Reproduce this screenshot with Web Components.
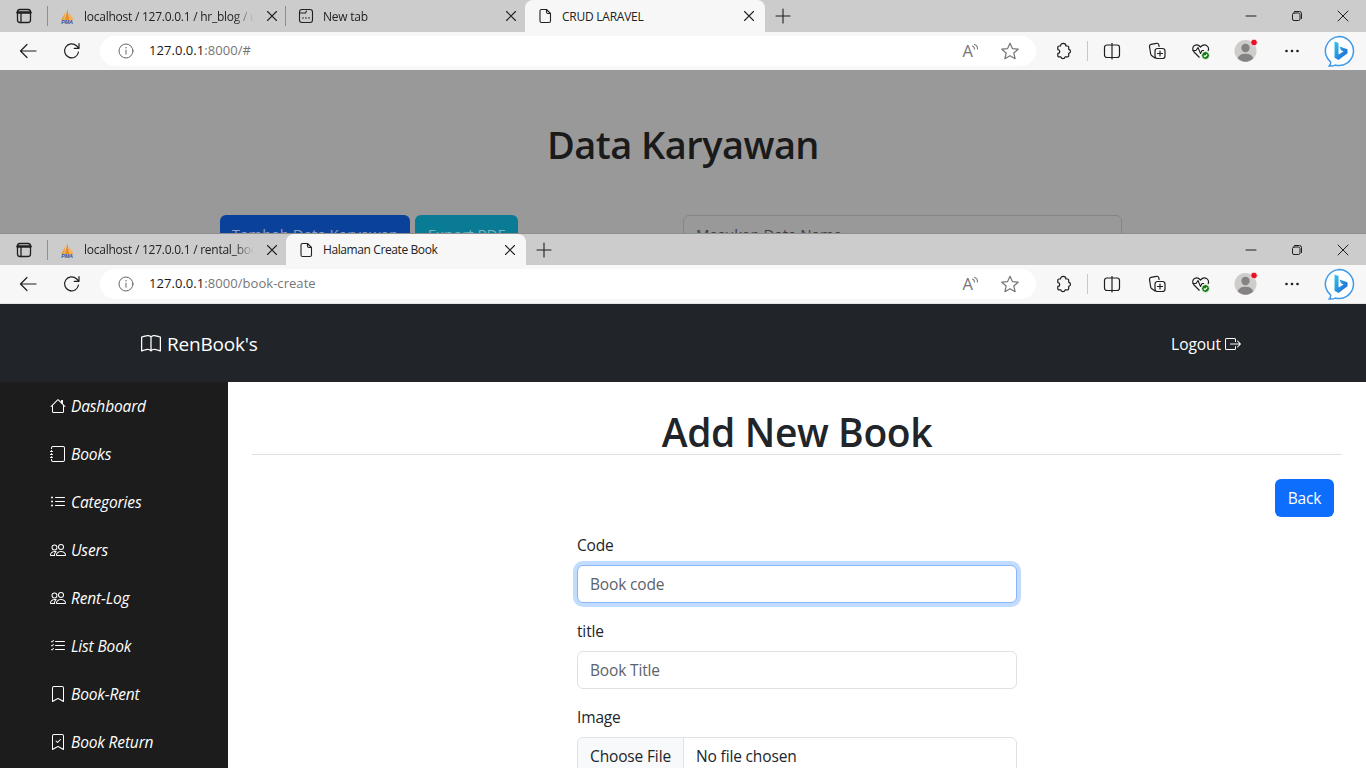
<!DOCTYPE html>
<html lang="en">
<head>
<meta charset="utf-8">
<title>Halaman Create Book</title>
<style>
  html, body { margin: 0; height: 768px; overflow: hidden; }
  body { display: flex; flex-direction: column; font-family: "Open Sans", "Liberation Sans", sans-serif; }
</style>
</head>
<body>

<browser-window style="height:233px" url-host="127.0.0.1" url-path=":8000/#" strip="32">
  <browser-tab slot="tabs" icon="pma" width="239" label="localhost / 127.0.0.1 / hr_blog / u" sep></browser-tab>
  <browser-tab slot="tabs" icon="newtab" width="239" label="New tab"></browser-tab>
  <browser-tab slot="tabs" icon="page" width="240" label="CRUD LARAVEL" active></browser-tab>
  <dimmed-page></dimmed-page>
</browser-window>

<browser-window style="flex:1" url-host="127.0.0.1" url-path=":8000/book-create" strip="31" edge>
  <browser-tab slot="tabs" icon="pma" width="239" label="localhost / 127.0.0.1 / rental_boo"></browser-tab>
  <browser-tab slot="tabs" icon="page" width="240" label="Halaman Create Book" active style="letter-spacing:-.4px"></browser-tab>
  <book-app></book-app>
</browser-window>

<script>
'use strict';

// bootstrap icons, 16x16 grid
const bsIcons = {
  book: 'M1 2.828c.885-.37 2.154-.769 3.388-.893 1.33-.134 2.458.063 3.112.752v9.746c-.935-.53-2.12-.603-3.213-.493-1.18.12-2.37.461-3.287.811V2.828zm7.5-.141c.654-.689 1.782-.886 3.112-.752 1.234.124 2.503.523 3.388.893v9.923c-.918-.35-2.107-.692-3.287-.81-1.094-.111-2.278-.039-3.213.492V2.687zM8 1.783C7.015.936 5.587.81 4.287.94c-1.514.153-3.042.672-3.994 1.105A.5.5 0 0 0 0 2.5v11a.5.5 0 0 0 .707.455c.882-.4 2.303-.881 3.68-1.02 1.409-.142 2.59.087 3.223.877a.5.5 0 0 0 .78 0c.633-.79 1.814-1.019 3.222-.877 1.378.139 2.8.62 3.681 1.02A.5.5 0 0 0 16 13.5v-11a.5.5 0 0 0-.293-.455c-.952-.433-2.48-.952-3.994-1.105C10.413.809 8.985.936 8 1.783z',
  house: 'M8.707 1.5a1 1 0 0 0-1.414 0L.646 8.146a.5.5 0 0 0 .708.708L2 8.207V13.5A1.5 1.5 0 0 0 3.5 15h9a1.5 1.5 0 0 0 1.5-1.5V8.207l.646.647a.5.5 0 0 0 .708-.708L13 5.793V2.5a.5.5 0 0 0-.5-.5h-1a.5.5 0 0 0-.5.5v1.293L8.707 1.5ZM13 7.207V13.5a.5.5 0 0 1-.5.5h-9a.5.5 0 0 1-.5-.5V7.207l5-5 5 5Z',
  journal: 'M3 0h10a2 2 0 0 1 2 2v12a2 2 0 0 1-2 2H3a2 2 0 0 1-2-2v-1h1v1a1 1 0 0 0 1 1h10a1 1 0 0 0 1-1V2a1 1 0 0 0-1-1H3a1 1 0 0 0-1 1v1H1V2a2 2 0 0 1 2-2zM1 5v-.5a.5.5 0 0 1 1 0V5h.5a.5.5 0 0 1 0 1h-2a.5.5 0 0 1 0-1H1zm0 3v-.5a.5.5 0 0 1 1 0V8h.5a.5.5 0 0 1 0 1h-2a.5.5 0 0 1 0-1H1zm0 3v-.5a.5.5 0 0 1 1 0v.5h.5a.5.5 0 0 1 0 1h-2a.5.5 0 0 1 0-1H1z',
  list: 'M5 11.5a.5.5 0 0 1 .5-.5h9a.5.5 0 0 1 0 1h-9a.5.5 0 0 1-.5-.5zm0-4a.5.5 0 0 1 .5-.5h9a.5.5 0 0 1 0 1h-9a.5.5 0 0 1-.5-.5zm0-4a.5.5 0 0 1 .5-.5h9a.5.5 0 0 1 0 1h-9a.5.5 0 0 1-.5-.5zm-3 1a1 1 0 1 0 0-2 1 1 0 0 0 0 2zm0 4a1 1 0 1 0 0-2 1 1 0 0 0 0 2zm0 4a1 1 0 1 0 0-2 1 1 0 0 0 0 2z',
  people: 'M15 14s1 0 1-1-1-4-5-4-5 3-5 4 1 1 1 1h8Zm-7.978-1A.261.261 0 0 1 7 12.996c.001-.264.167-1.03.76-1.72C8.312 10.629 9.282 10 11 10c1.717 0 2.687.63 3.24 1.276.593.69.758 1.457.76 1.72l-.008.002a.274.274 0 0 1-.014.002H7.022ZM11 7a2 2 0 1 0 0-4 2 2 0 0 0 0 4Zm3-2a3 3 0 1 1-6 0 3 3 0 0 1 6 0ZM6.936 9.28a5.88 5.88 0 0 0-1.23-.247A7.35 7.35 0 0 0 5 9c-4 0-5 3-5 4 0 .667.333 1 1 1h4.216A2.238 2.238 0 0 1 5 13c0-1.01.377-2.042 1.09-2.904.243-.294.526-.569.846-.816ZM4.92 10A5.493 5.493 0 0 0 4 13H1c0-.26.164-1.03.76-1.724.545-.636 1.492-1.256 3.16-1.275ZM1.5 5.5a3 3 0 1 1 6 0 3 3 0 0 1-6 0Zm3-2a2 2 0 1 0 0 4 2 2 0 0 0 0-4Z',
  listcheck: 'M5 11.5a.5.5 0 0 1 .5-.5h9a.5.5 0 0 1 0 1h-9a.5.5 0 0 1-.5-.5zm0-4a.5.5 0 0 1 .5-.5h9a.5.5 0 0 1 0 1h-9a.5.5 0 0 1-.5-.5zm0-4a.5.5 0 0 1 .5-.5h9a.5.5 0 0 1 0 1h-9a.5.5 0 0 1-.5-.5zM3.854 2.146a.5.5 0 0 1 0 .708l-1.5 1.5a.5.5 0 0 1-.708 0l-.5-.5a.5.5 0 1 1 .708-.708L2 3.293l1.146-1.147a.5.5 0 0 1 .708 0zm0 4a.5.5 0 0 1 0 .708l-1.5 1.5a.5.5 0 0 1-.708 0l-.5-.5a.5.5 0 1 1 .708-.708L2 7.293l1.146-1.147a.5.5 0 0 1 .708 0zm0 4a.5.5 0 0 1 0 .708l-1.5 1.5a.5.5 0 0 1-.708 0l-.5-.5a.5.5 0 0 1 .708-.708l.146.147 1.146-1.147a.5.5 0 0 1 .708 0z',
  bookmark: 'M2 2a2 2 0 0 1 2-2h8a2 2 0 0 1 2 2v13.5a.5.5 0 0 1-.777.416L8 13.101l-5.223 2.815A.5.5 0 0 1 2 15.5V2zm2-1a1 1 0 0 0-1 1v12.566l4.723-2.482a.5.5 0 0 1 .554 0L13 14.566V2a1 1 0 0 0-1-1H4z',
  bookmarkcheck: 'M10.854 5.146a.5.5 0 0 1 0 .708l-3 3a.5.5 0 0 1-.708 0l-1.5-1.5a.5.5 0 1 1 .708-.708L7.5 7.793l2.646-2.647a.5.5 0 0 1 .708 0zM2 2a2 2 0 0 1 2-2h8a2 2 0 0 1 2 2v13.5a.5.5 0 0 1-.777.416L8 13.101l-5.223 2.815A.5.5 0 0 1 2 15.5V2zm2-1a1 1 0 0 0-1 1v12.566l4.723-2.482a.5.5 0 0 1 .554 0L13 14.566V2a1 1 0 0 0-1-1H4z',
  logout: 'M10 12.5a.5.5 0 0 1-.5.5h-8a.5.5 0 0 1-.5-.5v-9a.5.5 0 0 1 .5-.5h8a.5.5 0 0 1 .5.5v2a.5.5 0 0 0 1 0v-2A1.5 1.5 0 0 0 9.5 2h-8A1.5 1.5 0 0 0 0 3.5v9A1.5 1.5 0 0 0 1.5 14h8a1.5 1.5 0 0 0 1.5-1.5v-2a.5.5 0 0 0-1 0v2zM15.854 8.354a.5.5 0 0 0 0-.708l-3-3a.5.5 0 0 0-.708.708L14.293 7.5H5.5a.5.5 0 0 0 0 1h8.793l-2.147 2.146a.5.5 0 0 0 .708.708l3-3z'
};

class BsIcon extends HTMLElement {
  connectedCallback() {
    const size = this.getAttribute('size') || 16;
    this.attachShadow({mode: 'open'}).innerHTML = `
      <style>:host { display: inline-flex; flex: none; } svg { display: block; }</style>
      <svg width="${size}" height="${size}" viewBox="0 0 16 16" fill="currentColor"><path fill-rule="evenodd" d="${bsIcons[this.getAttribute('name')]}"/></svg>`;
  }
}

// browser chrome glyphs, all on a 20x20 grid unless they say otherwise
const line = 'fill="none" stroke="currentColor" stroke-linecap="round" stroke-linejoin="round"';
const chromeIcons = {
  sidebar: `<svg width="20" height="20" viewBox="0 0 20 20" ${line} stroke-width="1.3"><rect x="3.5" y="3.5" width="13" height="13" rx="2.5"/><path d="M7 7v9.5"/><path d="M3.5 6.5h13" stroke-width="2.4"/></svg>`,
  pma: `<svg width="16" height="16" viewBox="0 0 16 16"><path d="M2 12 6 5l-.5 7z" fill="#e8a33a"/><path d="M6 12 8.3 1l2 11z" fill="#f08a1d"/><path d="M10.6 12 10 4.500 15 12z" fill="#f5b25a"/><text x="8" y="15.800" font-family="Liberation Sans" font-size="5.500" font-weight="700" font-style="italic" text-anchor="middle" fill="#3b4f8f" aria-hidden="true">PMA</text></svg>`,
  newtab: `<svg width="16" height="16" viewBox="0 0 16 16" ${line} stroke-width="1.1"><rect x="1.500" y="1.500" width="13" height="13" rx="2.500"/><path d="M1.500 5h6l1-2"/><path d="M5 10h.01M8 10h.01M11 10h.01" stroke-width="1.600"/></svg>`,
  page: `<svg width="16" height="16" viewBox="0 0 16 16" ${line} stroke-width="1.100"><path d="M3 3a1.500 1.500 0 0 1 1.500-1.500H9.500L13.500 5.500V13A1.500 1.500 0 0 1 12 14.500H4.500A1.500 1.500 0 0 1 3 13zM9.500 1.500V4A1.500 1.500 0 0 0 11 5.500h2.500"/></svg>`,
  close: `<svg width="12" height="12" viewBox="0 0 12 12" ${line} stroke-width="1.100"><path d="M1.500 1.500l9 9M10.500 1.500l-9 9"/></svg>`,
  plus: `<svg width="16" height="16" viewBox="0 0 16 16" ${line} stroke-width="1.100"><path d="M8 1v14M1 8h14"/></svg>`,
  minimize: `<svg width="12" height="12" viewBox="0 0 12 12" ${line} stroke-width="1"><path d="M1 6h10"/></svg>`,
  restore: `<svg width="12" height="12" viewBox="0 0 12 12" ${line} stroke-width="1"><rect x="1.500" y="3" width="7.500" height="7.500" rx="1.500"/><path d="M3.500 1.500h5A2 2 0 0 1 10.500 3.500v5"/></svg>`,
  winclose: `<svg width="12" height="12" viewBox="0 0 12 12" ${line} stroke-width="1"><path d="M1 1l10 10M11 1 1 11"/></svg>`,
  back: `<svg width="20" height="20" viewBox="0 0 20 20" ${line} stroke-width="1.200"><path d="M18 10H2.500M9 3.500 2.500 10 9 16.500"/></svg>`,
  reload: `<svg width="20" height="20" viewBox="0 0 20 20" ${line} stroke-width="1.200"><path d="M16.500 11a7 7 0 1 1-2-6.200L17 7.300M17 2.500v4.800h-4.800"/></svg>`,
  info: `<svg width="16" height="16" viewBox="0 0 16 16" fill="none" stroke="#666" stroke-width="1" stroke-linecap="round"><circle cx="8" cy="8" r="7"/><path d="M8 7.200v4"/><path d="M8 4.800h.01" stroke-width="1.400"/></svg>`,
  read: `<svg width="20" height="20" viewBox="0 0 20 20" style="overflow:visible"><text x="2.500" y="16" font-family="Open Sans" font-size="16.500" fill="#767676" aria-hidden="true">A</text><path d="M12.500 5c1.200.4 2 1.400 2 3M14.500 3.500c1.800.5 3 2.300 3 4.500" fill="none" stroke="#767676" stroke-width="1.100" stroke-linecap="round"/></svg>`,
  star: `<svg width="20" height="20" viewBox="0 0 20 20" fill="none" stroke="#767676" stroke-width="1.200" stroke-linejoin="round"><path d="M10 2.200 12.400 7.600l5.800.6-4.400 3.800 1.300 5.700-5.100-3-5.100 3 1.300-5.700L1.800 8.200l5.800-.6z"/></svg>`,
  extension: `<svg width="20" height="20" viewBox="0 0 20 20" ${line} stroke-width="1.200"><path d="M7.500 5c0-1.500 1.200-2.700 2.700-2.700s2.700 1.200 2.700 2.700h1.600c.7 0 1.200.5 1.200 1.200v2.100c1.200.2 1.800 1.100 1.800 2s-.6 1.800-1.800 2v2.400c0 .7-.5 1.200-1.200 1.200h-2.400c-.2 1-1.100 1.700-2.100 1.700s-1.900-.7-2.100-1.700H6c-.7 0-1.200-.5-1.200-1.200v-2.300c.9 0 1.900-.7 1.900-1.900s-1-1.900-1.900-1.900V6.200C4.800 5.500 5.300 5 6 5z"/></svg>`,
  split: `<svg width="20" height="20" viewBox="0 0 20 20" ${line} stroke-width="1.200"><rect x="2.500" y="4" width="15" height="12.500" rx="2.500"/><path d="M10 2.500v15.500"/></svg>`,
  collections: `<svg width="20" height="20" viewBox="0 0 20 20" ${line} stroke-width="1.200"><path d="M8 17 4.500 14.500a2 2 0 0 1-.8-1.500L2.500 5.500A2 2 0 0 1 4 3.300l5.500-1a2 2 0 0 1 2.300 1.500l.3 1.700"/><rect x="8" y="7.500" width="10" height="10" rx="2.500"/><path d="M13 10v5M10.500 12.500h5"/></svg>`,
  health: `<svg width="20" height="20" viewBox="0 0 20 20"><path d="M8.500 16.500 3 11C1 9 1.500 5.500 3.500 4.500S7.500 3.800 9.500 6c2-2.200 4.200-2.500 6-1.500s2.800 3.500 1.500 5.500" fill="none" stroke="currentColor" stroke-width="1.200" stroke-linejoin="round"/><path d="M1.500 9.500h3.500l2-3 2.500 6 1.500-3h2" fill="none" stroke="currentColor" stroke-width="1.100" stroke-linejoin="round"/><circle cx="14.500" cy="14.500" r="4" fill="#107c10" stroke="#f7f7f7"/><path d="M12.800 14.500l1.200 1.200 2.200-2.200" fill="none" stroke="#fff" stroke-width="1.100"/></svg>`,
  avatar: `<svg width="24" height="24" viewBox="0 0 24 24"><circle cx="11.500" cy="12" r="11" fill="#cfcdcb"/><circle cx="11.500" cy="9" r="4.200" fill="#858381"/><path d="M3.800 19.500c1-3.500 4-4.800 7.700-4.800s6.700 1.300 7.700 4.800a11 11 0 0 1-15.400 0z" fill="#858381"/><circle cx="20" cy="3.500" r="3.300" fill="#e81123" stroke="#f7f7f7" stroke-width=".8"/></svg>`,
  more: `<svg width="20" height="20" viewBox="0 0 20 20" fill="currentColor"><circle cx="4.500" cy="10" r="1.300"/><circle cx="10" cy="10" r="1.300"/><circle cx="15.500" cy="10" r="1.300"/></svg>`,
  bing: `<svg width="32" height="32" viewBox="0 0 32 32"><defs><linearGradient id="bg" x1="0" y1="0" x2="1" y2="1"><stop offset="0" stop-color="#37c6e8"/><stop offset="1" stop-color="#1b5fd8"/></linearGradient></defs><path d="M16 1.500a14.500 14.500 0 1 1-3.800 28.500c-1.500 1-3.500 1.200-6 1 1-1 1.500-2.200 1.500-3.800A14.500 14.500 0 0 1 16 1.500z" fill="#fff" stroke="#3d9bea" stroke-width="1.500"/><path d="M11.500 6.500l4 1.500v11.500l5-3-2.500-1.300-1.500-3.700 8 2.800v4L15.500 25l-4-2.300z" fill="url(#bg)"/></svg>`
};

const browserTpl = document.createElement('template');
browserTpl.innerHTML = `
  <style>
    :host { display: flex; flex-direction: column; overflow: hidden; min-height: 0; color: #1f1f1f; font-family: "Open Sans", sans-serif; }
    :host([edge]) { border-top: 1px solid #8e8e8e; }
    .strip { display: flex; flex: none; background: #cccccc; position: relative; }
    .side { width: 47px; flex: none; display: flex; align-items: center; justify-content: flex-end; padding-right: 13px; box-sizing: border-box; }
    .side span, .cell { display: flex; }
    .sep { width: 1px; height: 20px; background: #8f8f8f; align-self: center; flex: none; margin-right: -1px; }
    .plus { width: 36px; display: flex; align-items: center; justify-content: center; }
    .win { margin-left: auto; display: flex; align-items: center; }
    .win span { width: 46px; display: flex; justify-content: center; }
    .toolbar { height: 38px; flex: none; box-sizing: border-box; background: #f7f7f7; display: flex; align-items: center; padding-left: 6px; }
    :host([edge]) .toolbar { height: 39px; border-bottom: 1px solid #e4e4e4; }
    .nav { width: 44px; display: flex; justify-content: center; }
    .pill { margin-left: 6px; width: 936px; height: 30px; flex: none; border-radius: 15px; background: #fff; display: flex; align-items: center; box-sizing: border-box; padding: 0 16px 0 18px; font-size: 13px; letter-spacing: .05px; line-height: 28px; }
    .pill .host { margin-left: 15px; color: #1a1a1a; padding-bottom: 2px; }
    .pill .path { color: #767676; padding-bottom: 2px; }
    .pill .end { margin-left: auto; display: flex; gap: 20px; }
    .tool { display: flex; }
    .vr { width: 1px; height: 20px; background: #c8c8c8; }
    .content { flex: 1; min-height: 0; overflow: hidden; display: flex; flex-direction: column; }
  </style>
  <div class="strip">
    <div class="side"><span data-i="sidebar"></span></div>
    <div class="sep"></div>
    <slot name="tabs"></slot>
    <div class="plus" data-i="plus"></div>
    <div class="win"><span data-i="minimize"></span><span data-i="restore"></span><span data-i="winclose"></span></div>
  </div>
  <div class="toolbar">
    <div class="nav" data-i="back"></div>
    <div class="nav" data-i="reload"></div>
    <div class="pill">
      <span class="cell" data-i="info"></span>
      <span class="host"></span><span class="path"></span>
      <span class="end"><span class="cell" data-i="read"></span><span class="cell" data-i="star"></span></span>
    </div>
    <span class="tool" style="margin-left:17px" data-i="extension"></span>
    <span class="vr" style="margin-left:14px"></span>
    <span class="tool" style="margin-left:14px" data-i="split"></span>
    <span class="tool" style="margin-left:25px" data-i="collections"></span>
    <span class="tool" style="margin-left:24px" data-i="health"></span>
    <span class="tool" style="margin-left:23px" data-i="avatar"></span>
    <span class="tool" style="margin-left:24px" data-i="more"></span>
    <span class="tool" style="margin-left:21px" data-i="bing"></span>
  </div>
  <div class="content"><slot></slot></div>`;

class BrowserWindow extends HTMLElement {
  constructor() {
    super();
    this.attachShadow({mode: 'open'}).appendChild(browserTpl.content.cloneNode(true));
  }

  connectedCallback() {
    const root = this.shadowRoot;
    root.querySelectorAll('[data-i]').forEach(el => {
      el.innerHTML = chromeIcons[el.dataset.i];
    });
    root.querySelector('.strip').style.height = this.getAttribute('strip') + 'px';
    root.querySelector('.host').textContent = this.getAttribute('url-host');
    root.querySelector('.path').textContent = this.getAttribute('url-path');
  }
}

class BrowserTab extends HTMLElement {
  connectedCallback() {
    this.attachShadow({mode: 'open'}).innerHTML = `
      <style>
        :host { display: inline-flex; align-items: center; height: 100%; box-sizing: border-box; vertical-align: top; width: ${this.getAttribute('width')}px; position: relative; font-size: 12px; letter-spacing: -.25px; padding: 0 8px 0 12px; color: #222; }
        :host([active]) { background: #f7f7f7; border-radius: 8px 8px 0 0; padding-right: 10px; }
        .ico { display: flex; flex: none; }
        .label { margin-left: 9px; flex: 1; min-width: 0; white-space: nowrap; overflow: hidden; -webkit-mask-image: linear-gradient(to left, transparent 4px, #000 24px); mask-image: linear-gradient(to left, transparent 4px, #000 24px); }
        :host([active]) .label { -webkit-mask-image: none; mask-image: none; }
        .x { display: flex; flex: none; margin-left: 8px; }
        :host([sep])::after { content: ""; position: absolute; right: 0; top: 6px; height: 20px; width: 1px; background: #8f8f8f; }
      </style>
      <span class="ico">${chromeIcons[this.getAttribute('icon')]}</span>
      <span class="label">${this.getAttribute('label')}</span>
      <span class="x">${chromeIcons.close}</span>`;
  }
}

class DimmedPage extends HTMLElement {
  connectedCallback() {
    this.attachShadow({mode: 'open'}).innerHTML = `
      <style>
        :host { display: block; flex: 1; background: #999999; font-family: "Open Sans", sans-serif; color: #1a1a1a; }
        h1 { margin: 0; padding-top: 46px; text-align: center; font-size: 38px; line-height: 56px; font-weight: 600; letter-spacing: -.55px; }
        .row { display: flex; margin-top: 43px; padding-left: 220px; font-size: 15px; color: #8f9fb8; }
        .btn { height: 38px; border-radius: 6px; display: flex; align-items: center; justify-content: center; box-sizing: border-box; }
        .blue { width: 190px; background: #0a419a; }
        .teal { width: 103px; margin-left: 5px; background: #0a7b94; color: #7cb3c0; }
        .search { width: 439px; margin-left: 165px; height: 38px; box-sizing: border-box; border: 1px solid #858585; border-radius: 6px; padding: 0 12px; display: flex; align-items: center; color: #3f3f3f; }
      </style>
      <h1>Data Karyawan</h1>
      <div class="row">
        <div class="btn blue">Tambah Data Karyawan</div>
        <div class="btn teal">Export PDF</div>
        <div class="search">Masukan Data Nama</div>
      </div>`;
  }
}

class SideLink extends HTMLElement {
  connectedCallback() {
    this.attachShadow({mode: 'open'}).innerHTML = `
      <style>
        :host { display: flex; align-items: center; height: 48px; padding-left: 50px; color: #fff; font-size: 15.500px; font-style: italic; letter-spacing: -.15px; }
        .i { width: 21px; display: flex; }
      </style>
      <span class="i"><bs-icon name="${this.getAttribute('icon')}"></bs-icon></span><slot></slot>`;
  }
}

class FormField extends HTMLElement {
  connectedCallback() {
    this.attachShadow({mode: 'open'}).innerHTML = `
      <style>
        :host { display: block; margin-bottom: 16px; color: #212529; font-size: 15.500px; letter-spacing: -.15px; }
        label { display: block; height: 24px; line-height: 24px; margin-bottom: 8px; }
        input { display: block; width: 100%; height: 38px; box-sizing: border-box; padding: 0 12px; border: 1px solid #dee2e6; border-radius: 6px; font: inherit; letter-spacing: inherit; color: #212529; background: #fff; outline: 0; }
        input::placeholder { color: #5c636a; opacity: 1; }
        :host([focused]) input { border-color: #86b7fe; box-shadow: 0 0 0 4px #c2dbfe; }
      </style>
      <label>${this.getAttribute('label')}</label>
      <input type="text" placeholder="${this.getAttribute('placeholder')}">`;
  }
}

class FileField extends HTMLElement {
  connectedCallback() {
    this.attachShadow({mode: 'open'}).innerHTML = `
      <style>
        :host { display: block; color: #212529; font-size: 15.500px; letter-spacing: -.15px; }
        label { display: block; height: 24px; line-height: 24px; margin-bottom: 8px; }
        .box { display: flex; height: 38px; box-sizing: border-box; border: 1px solid #dee2e6; border-radius: 6px; overflow: hidden; }
        .pick { width: 106px; flex: none; box-sizing: border-box; background: #f8f9fa; border-right: 1px solid #dee2e6; display: flex; align-items: center; justify-content: center; }
        .name { padding-left: 12px; display: flex; align-items: center; }
      </style>
      <label>${this.getAttribute('label')}</label>
      <div class="box"><span class="pick">Choose File</span><span class="name">No file chosen</span></div>`;
  }
}

class BookApp extends HTMLElement {
  connectedCallback() {
    this.attachShadow({mode: 'open'}).innerHTML = `
      <style>
        :host { display: flex; flex-direction: column; flex: 1; min-height: 0; font-family: "Open Sans", sans-serif; background: #fff; color: #212529; }
        .nav { height: 78px; flex: none; box-sizing: border-box; padding: 2px 125px 0 141px; background: #212529; color: #fff; display: flex; align-items: center; justify-content: space-between; }
        .brand { display: flex; align-items: center; gap: 6px; font-size: 19px; letter-spacing: -.2px; }
        .logout { display: flex; align-items: center; gap: 4px; font-size: 15.500px; letter-spacing: -.05px; }
        .body { flex: 1; min-height: 0; display: flex; }
        .menu { width: 228px; flex: none; background: #1c1c1c; }
        main { flex: 1; min-width: 0; padding: 24px 32px 0 24px; overflow: hidden; }
        h1 { margin: 0 -8px 0 0; height: 48px; line-height: 52px; font-size: 39px; font-weight: 600; letter-spacing: -.4px; text-align: center; border-bottom: 1px solid #dee2e6; }
        .actions { display: flex; justify-content: flex-end; margin-top: 24px; }
        .back { height: 38px; width: 59px; border-radius: 6px; background: #0d6efd; color: #fff; display: flex; align-items: center; justify-content: center; font-size: 15.500px; letter-spacing: -.15px; }
        form { width: 440px; margin: 16px auto 0; position: relative; left: 4px; }
      </style>
      <div class="nav">
        <div class="brand"><bs-icon name="book" size="20"></bs-icon><span>RenBook's</span></div>
        <div class="logout"><span>Logout</span><bs-icon name="logout"></bs-icon></div>
      </div>
      <div class="body">
        <nav class="menu">
          <side-link icon="house">Dashboard</side-link>
          <side-link icon="journal">Books</side-link>
          <side-link icon="list">Categories</side-link>
          <side-link icon="people">Users</side-link>
          <side-link icon="people">Rent-Log</side-link>
          <side-link icon="listcheck">List Book</side-link>
          <side-link icon="bookmark">Book-Rent</side-link>
          <side-link icon="bookmarkcheck">Book Return</side-link>
        </nav>
        <main>
          <h1>Add New Book</h1>
          <div class="actions"><div class="back">Back</div></div>
          <form>
            <form-field label="Code" placeholder="Book code" focused></form-field>
            <form-field label="title" placeholder="Book Title"></form-field>
            <file-field label="Image"></file-field>
          </form>
        </main>
      </div>`;
  }
}

customElements.define('bs-icon', BsIcon);
customElements.define('browser-window', BrowserWindow);
customElements.define('browser-tab', BrowserTab);
customElements.define('dimmed-page', DimmedPage);
customElements.define('side-link', SideLink);
customElements.define('form-field', FormField);
customElements.define('file-field', FileField);
customElements.define('book-app', BookApp);
</script>
</body>
</html>
